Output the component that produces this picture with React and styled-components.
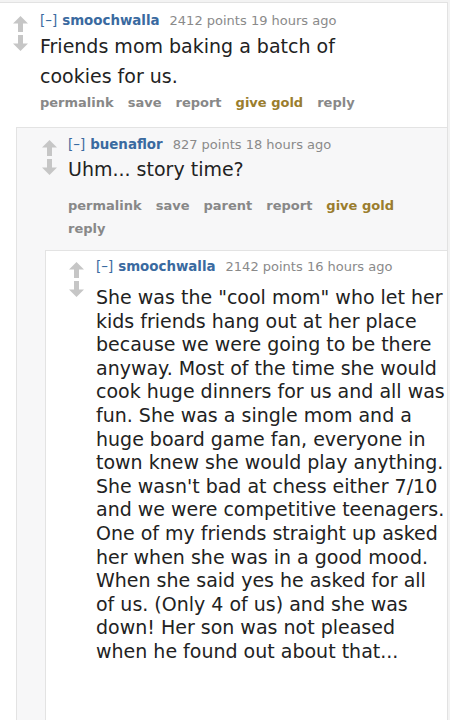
import React from "react";
import styled, { createGlobalStyle } from "styled-components";

const Global = createGlobalStyle`
  html, body { margin: 0; padding: 0; background: #f3f3f3; }
  body { width: 450px; height: 720px; overflow: hidden; font-family: "DejaVu Sans", Verdana, sans-serif; }
`;

const Page = styled.div`
  width: 448px;
  height: 718px;
  overflow: hidden;
  background: #fff;
  border-top: 1px solid #e2e2e2;
  border-right: 1px solid #e2e2e2;
  margin-top: 2px;
  box-sizing: border-box;
`;

const Comment = styled.div`
  display: flex;
  padding-left: ${(p) => p.$indent}px;
  padding-top: ${(p) => p.$top}px;
`;

const Votes = styled.div`
  width: ${(p) => p.$w}px;
  flex: none;
  display: flex;
  flex-direction: column;
  gap: 3px;
  padding-top: ${(p) => p.$top}px;
`;

const Entry = styled.div`
  flex: 1;
  min-width: 0;
`;

const Tagline = styled.div`
  font-size: 13px;
  line-height: 16px;
  color: #8a8a8a;
  white-space: nowrap;
  display: flex;
  gap: 10px;
  align-items: baseline;
`;

const Author = styled.span`
  font-weight: bold;
  font-size: 13.4px;
  color: #3a6aa0;
`;

const Expand = styled.span`
  font-weight: normal;
  color: #3a6aa0;
  margin-right: 5px;
`;

const Body = styled.div`
  font-size: 19px;
  line-height: ${(p) => p.$lh}px;
  color: #222;
  margin-top: ${(p) => p.$mt}px;
  padding-right: ${(p) => p.$pr}px;
`;

const Actions = styled.div`
  display: flex;
  flex-wrap: wrap;
  column-gap: 14px;
  row-gap: 4px;
  margin-top: ${(p) => p.$mt}px;
  padding-right: ${(p) => p.$pr}px;
`;

const Action = styled.span`
  font-size: 13px;
  line-height: 19px;
  font-weight: bold;
  color: ${(p) => (p.$gold ? "#9a7d2e" : "#888")};
`;

const Child = styled.div`
  margin-left: ${(p) => p.$ml}px;
  margin-top: ${(p) => p.$mt}px;
  background: ${(p) => p.$bg};
  border: 1px solid #e3e3e3;
  border-right: none;
  min-height: 600px;
`;

const Arrow = ({ down }) => (
  <svg width="15" height="16" viewBox="0 0 15 16" style={down ? { transform: "rotate(180deg)" } : undefined}>
    <path d="M7.5 0 L15 7.5 L10 7.5 L10 16 L5 16 L5 7.5 L0 7.5 Z" fill="#c6c6c6" />
  </svg>
);

const Tag = ({ name, points, time }) => (
  <Tagline>
    <Author>
      <Expand>[–]</Expand>
      {name}
    </Author>
    <span>
      {points} points {time} ago
    </span>
  </Tagline>
);

export default function App() {
  return (
    <>
      <Global />
      <Page>
        <Comment $indent={13} $top={10}>
          <Votes $w={27} $top={3}>
            <Arrow />
            <Arrow down />
          </Votes>
          <Entry>
            <Tag name="smoochwalla" points="2412" time="19 hours" />
            <Body $lh={30} $mt={2} $pr={60}>
              Friends mom baking a batch of cookies for us.
            </Body>
            <Actions $mt={2} $pr={0}>
              <Action>permalink</Action>
              <Action>save</Action>
              <Action>report</Action>
              <Action $gold>give gold</Action>
              <Action>reply</Action>
            </Actions>
            <Child $ml={-24} $mt={15} $bg="#f7f7f8">
              <Comment $indent={25} $top={9}>
                <Votes $w={26} $top={3}>
                  <Arrow />
                  <Arrow down />
                </Votes>
                <Entry>
                  <Tag name="buenaflor" points="827" time="18 hours" />
                  <Body $lh={28} $mt={2} $pr={0}>
                    Uhm... story time?
                  </Body>
                  <Actions $mt={13} $pr={30}>
                    <Action>permalink</Action>
                    <Action>save</Action>
                    <Action>parent</Action>
                    <Action>report</Action>
                    <Action $gold>give gold</Action>
                    <Action>reply</Action>
                  </Actions>
                  <Child $ml={-23} $mt={12} $bg="#fff">
                    <Comment $indent={23} $top={8}>
                      <Votes $w={27} $top={3}>
                        <Arrow />
                        <Arrow down />
                      </Votes>
                      <Entry>
                        <Tag name="smoochwalla" points="2142" time="16 hours" />
                        <Body $lh={23.6} $mt={11} $pr={0}>
                          She was the "cool mom" who let her kids friends hang out at her place because we were going to be there anyway. Most of the time she would cook huge dinners for us and all was fun. She was a single mom and a huge board game fan, everyone in town knew she would play anything. She wasn't bad at chess either 7/10 and we were competitive teenagers. One of my friends straight up asked her when she was in a good mood. When she said yes he asked for all of us. (Only 4 of us) and she was down! Her son was not pleased when he found out about that...
                        </Body>
                      </Entry>
                    </Comment>
                  </Child>
                </Entry>
              </Comment>
            </Child>
          </Entry>
        </Comment>
      </Page>
    </>
  );
}
